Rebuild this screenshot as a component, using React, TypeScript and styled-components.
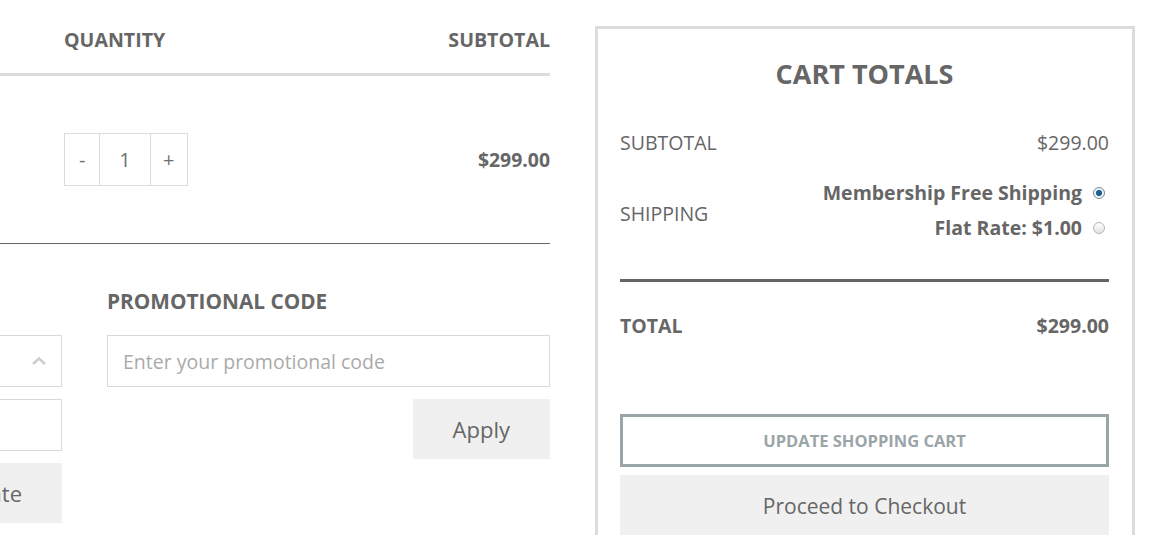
import React from "react";
import styled, { createGlobalStyle } from "styled-components";

const GlobalStyle = createGlobalStyle`
  html, body {
    margin: 0;
    padding: 0;
    background: #fff;
    overflow: hidden;
  }
  body {
    font-family: "Open Sans", "Liberation Sans", sans-serif;
    color: #666;
  }
  * {
    box-sizing: border-box;
  }
`;

const Page = styled.div`
  display: flex;
  align-items: flex-start;
  gap: 45px;
  width: 1158px;
  height: 535px;
  overflow: hidden;
`;

const CartArea = styled.div`
  width: 550px;
  flex-shrink: 0;
  display: flex;
  flex-direction: column;
`;

const TableHead = styled.div`
  display: grid;
  grid-template-columns: 64px 1fr auto;
  padding: 27px 0 20px;
  border-bottom: 3px solid #dcdcdc;
`;

const HeadCell = styled.div<{ $right?: boolean }>`
  grid-column: ${(p) => (p.$right ? 3 : 2)};
  font-size: 19.6px;
  line-height: 26px;
  font-weight: 700;
  text-transform: uppercase;
  text-align: ${(p) => (p.$right ? "right" : "left")};
`;

const ItemRow = styled.div`
  display: grid;
  grid-template-columns: 64px 1fr auto;
  align-items: center;
  height: 168px;
  border-bottom: 1px solid #666;
`;

const Qty = styled.div`
  grid-column: 2;
  display: flex;
  width: 124px;
  height: 53px;
  border: 1px solid #dcdcdc;
`;

const QtyCell = styled.div<{ $w: number; $last?: boolean }>`
  width: ${(p) => p.$w}px;
  display: flex;
  align-items: center;
  justify-content: center;
  font-size: 20px;
  color: #707070;
  border-right: ${(p) => (p.$last ? "none" : "1px solid #dcdcdc")};
`;

const Price = styled.div`
  grid-column: 3;
  font-size: 19.4px;
  font-weight: 700;
`;

const Bottom = styled.div`
  display: flex;
  gap: 45px;
`;

const EstimateCol = styled.div`
  width: 400px;
  margin-left: -338px;
  padding-top: 91px;
  display: flex;
  flex-direction: column;
  align-items: flex-end;
  gap: 12px;
`;

const Field = styled.div`
  width: 100%;
  height: 52px;
  border: 1px solid #d8d8d8;
  display: flex;
  align-items: center;
  justify-content: flex-end;
  padding-right: 14px;
  color: #cfcfcf;
`;

const PromoCol = styled.div`
  flex: 1;
  display: flex;
  flex-direction: column;
  align-items: flex-end;
  padding-top: 44px;
`;

const PromoTitle = styled.div`
  align-self: stretch;
  font-size: 20.8px;
  line-height: 26px;
  font-weight: 700;
  text-transform: uppercase;
  margin-bottom: 21px;
`;

const PromoInput = styled.input`
  align-self: stretch;
  height: 52px;
  border: 1px solid #d8d8d8;
  padding: 0 15px;
  font-family: inherit;
  font-size: 19.5px;
  color: #666;
  outline: none;
  &::placeholder {
    color: #aaa;
  }
`;

const GrayButton = styled.button<{ $h: number; $size: number; $pad?: string }>`
  height: ${(p) => p.$h}px;
  border: none;
  background: #f0f0f0;
  font-family: inherit;
  font-size: ${(p) => p.$size}px;
  color: #666;
  padding: ${(p) => p.$pad || "0 40px"};
  cursor: pointer;
`;

const Panel = styled.div`
  width: 540px;
  flex-shrink: 0;
  margin-top: 26px;
  height: 540px;
  border: 3px solid #dcdcdc;
  padding: 27px 23px 0 22px;
  display: flex;
  flex-direction: column;
`;

const PanelTitle = styled.h2`
  margin: 0;
  text-align: center;
  font-size: 27px;
  line-height: 36px;
  font-weight: 700;
  text-transform: uppercase;
`;

const TotalsRow = styled.div<{ $bold?: boolean; $mt: number }>`
  display: flex;
  justify-content: space-between;
  align-items: center;
  margin-top: ${(p) => p.$mt}px;
  font-size: 19.5px;
  line-height: 26px;
  font-weight: ${(p) => (p.$bold ? 700 : 400)};
  text-transform: uppercase;
`;

const ShipLabel = styled.span`
  padding-top: 7px;
`;

const ShipOptions = styled.div`
  display: flex;
  flex-direction: column;
  align-items: flex-end;
  text-transform: none;
`;

const ShipOption = styled.label`
  display: flex;
  align-items: center;
  gap: 11px;
  height: 35px;
  font-weight: 700;
`;

const Radio = styled.span<{ $on?: boolean }>`
  width: 12px;
  height: 12px;
  border-radius: 50%;
  border: 1px solid ${(p) => (p.$on ? "#7a8c99" : "#b5b5b5")};
  background: ${(p) =>
    p.$on
      ? "radial-gradient(circle, #1f5f8c 0 2.5px, #4f8fbf 3px, #eef2f5 3.5px)"
      : "linear-gradient(#fff, #e2e2e2)"};
  margin-right: 4px;
`;

const Rule = styled.hr`
  margin: 34px 0 0;
  border: none;
  border-top: 3px solid #666;
`;

const OutlineButton = styled.button`
  margin-top: 75px;
  height: 53px;
  border: 3px solid #9aa5a8;
  background: #fff;
  font-family: inherit;
  font-size: 16.5px;
  font-weight: 700;
  color: #9aa5a8;
  text-transform: uppercase;
  cursor: pointer;
`;

const CheckoutButton = styled(GrayButton)`
  margin-top: 8px;
  width: 100%;
`;

const App = () => {
  return (
    <>
      <GlobalStyle />
      <Page>
        <CartArea>
          <TableHead>
            <HeadCell>Quantity</HeadCell>
            <HeadCell $right>Subtotal</HeadCell>
          </TableHead>
          <ItemRow>
            <Qty>
              <QtyCell $w={36}>-</QtyCell>
              <QtyCell $w={51}>1</QtyCell>
              <QtyCell $w={37} $last>
                +
              </QtyCell>
            </Qty>
            <Price>$299.00</Price>
          </ItemRow>
          <Bottom>
            <EstimateCol>
              <Field>
                <svg width="16" height="10" viewBox="0 0 16 10">
                  <polyline
                    points="2,8 8,2.5 14,8"
                    fill="none"
                    stroke="#cfcfcf"
                    strokeWidth="2.6"
                  />
                </svg>
              </Field>
              <Field />
              <GrayButton $h={60} $size={22} $pad="0 40px 0 30px">
                Estimate
              </GrayButton>
            </EstimateCol>
            <PromoCol>
              <PromoTitle>Promotional Code</PromoTitle>
              <PromoInput placeholder="Enter your promotional code" />
              <GrayButton $h={60} $size={22} $pad="0 40px" style={{ marginTop: 12 }}>
                Apply
              </GrayButton>
            </PromoCol>
          </Bottom>
        </CartArea>
        <Panel>
          <PanelTitle>Cart Totals</PanelTitle>
          <TotalsRow $mt={38}>
            <span>Subtotal</span>
            <span>$299.00</span>
          </TotalsRow>
          <TotalsRow $mt={19}>
            <ShipLabel>Shipping</ShipLabel>
            <ShipOptions>
              <ShipOption>
                Membership Free Shipping
                <Radio $on />
              </ShipOption>
              <ShipOption>
                Flat Rate: $1.00
                <Radio />
              </ShipOption>
            </ShipOptions>
          </TotalsRow>
          <Rule />
          <TotalsRow $bold $mt={31}>
            <span>Total</span>
            <span>$299.00</span>
          </TotalsRow>
          <OutlineButton>Update Shopping Cart</OutlineButton>
          <CheckoutButton $h={62} $size={21}>
            Proceed to Checkout
          </CheckoutButton>
        </Panel>
      </Page>
    </>
  );
};

export default App;
